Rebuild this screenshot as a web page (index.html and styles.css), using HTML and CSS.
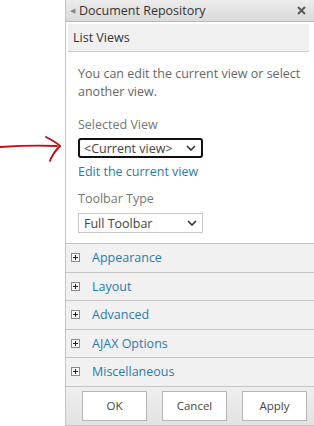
FILE: index.html
```html
<!DOCTYPE html>
<html>
<head>
<meta charset="utf-8">
<link rel="stylesheet" href="styles.css">
</head>
<body>
<svg class="annot" width="64" height="30" viewBox="0 0 64 30">
  <path d="M0 15 C 15 14, 35 13, 57 14" fill="none" stroke="#c40a14" stroke-width="1.8" stroke-linecap="round"/>
  <path d="M46 5 C 52 8, 57 11, 60 14 C 56 18, 52 23, 50 29" fill="none" stroke="#c40a14" stroke-width="1.8" stroke-linecap="round"/>
</svg>
<div class="panel">
  <div class="header">
    <span class="back">&#9664;</span>
    <span class="title">Document Repository</span>
    <svg class="close" width="9" height="9" viewBox="0 0 9 9"><path d="M1 1 L8 8 M8 1 L1 8" stroke="#5a5a5a" stroke-width="2"/></svg>
  </div>
  <div class="section-title">List Views</div>
  <div class="body">
    <p class="desc">You can edit the current view or select another view.</p>
    <div class="label label-first">Selected View</div>
    <div class="select select-active">
      <span>&lt;Current view&gt;</span>
      <svg class="chev" width="10" height="6" viewBox="0 0 10 6"><path d="M1 1 L5 5 L9 1" fill="none" stroke="#333" stroke-width="1.6"/></svg>
    </div>
    <a class="link" href="#">Edit the current view</a>
    <div class="label label-second">Toolbar Type</div>
    <div class="select">
      <span>Full Toolbar</span>
      <svg class="chev" width="10" height="6" viewBox="0 0 10 6"><path d="M1 1 L5 5 L9 1" fill="none" stroke="#333" stroke-width="1.6"/></svg>
    </div>
  </div>
  <div class="groups">
    <div class="group"><span class="plus"></span><span class="gname">Appearance</span></div>
    <div class="group"><span class="plus"></span><span class="gname">Layout</span></div>
    <div class="group"><span class="plus"></span><span class="gname">Advanced</span></div>
    <div class="group"><span class="plus"></span><span class="gname">AJAX Options</span></div>
    <div class="group"><span class="plus"></span><span class="gname">Miscellaneous</span></div>
  </div>
  <div class="footer">
    <button class="btn">OK</button>
    <button class="btn">Cancel</button>
    <button class="btn">Apply</button>
  </div>
</div>
</body>
</html>
```

FILE: styles.css
```css
html, body {
  margin: 0;
  padding: 0;
  background: #fff;
}
body {
  font-family: "Open Sans", "Noto Sans", sans-serif;
  font-size: 12.5px;
  color: #444;
  width: 314px;
  height: 426px;
  overflow: hidden;
  position: relative;
}
.annot {
  position: absolute;
  left: 0;
  top: 132px;
}
.panel {
  margin-left: 65px;
  border-left: 1px solid #c4c4c4;
  height: 426px;
  display: flex;
  flex-direction: column;
  box-sizing: border-box;
}
.header {
  height: 22px;
  box-sizing: border-box;
  border-bottom: 1px solid #b9b9b9;
  background: linear-gradient(#ececec, #dadada);
  display: flex;
  align-items: center;
  padding-left: 4px;
  padding-right: 8px;
  color: #333;
}
.back {
  font-size: 7px;
  color: #888;
  margin-right: 4px;
}
.title {
  flex: 1;
  font-size: 12.5px;
}
.close {
  display: block;
}
.section-title {
  margin: 2px 5px 0 2px;
  height: 28px;
  box-sizing: border-box;
  background: #f0f0f0;
  border-bottom: 1px solid #cfcfcf;
  padding-left: 5px;
  display: flex;
  align-items: center;
  color: #333;
  font-size: 12.5px;
}
.body {
  padding: 13px 0 0 12px;
  height: 191px;
  box-sizing: border-box;
}
.desc {
  margin: 0;
  line-height: 18px;
  color: #666;
  width: 225px;
}
.label {
  color: #777;
  line-height: 18px;
}
.label-first {
  margin-top: 15px;
}
.label-second {
  margin-top: 9px;
}
.select {
  width: 125px;
  height: 20px;
  box-sizing: border-box;
  border: 1px solid #c8c8c8;
  display: flex;
  align-items: center;
  justify-content: space-between;
  padding: 0 5px 0 5px;
  color: #444;
  margin-top: 5px;
}
.select-active {
  border: 2px solid #111;
  border-radius: 3px;
  padding-left: 4px;
  margin-top: 4px;
}
.chev {
  display: block;
}
.link {
  display: block;
  color: #2a7bab;
  text-decoration: none;
  line-height: 18px;
  margin-top: 5px;
}
.groups {
  border-top: 1px solid #c4c4c4;
  background: #f1f1f1;
}
.group {
  height: 28.5px;
  box-sizing: border-box;
  border-bottom: 1px solid #c4c4c4;
  display: flex;
  align-items: center;
  padding-left: 5px;
}
.plus {
  width: 9px;
  height: 9px;
  box-sizing: border-box;
  border: 1px solid #8a8a8a;
  background: #fff;
  position: relative;
  margin-right: 12px;
}
.plus::before, .plus::after {
  content: "";
  position: absolute;
  background: #222;
}
.plus::before {
  left: 1px;
  top: 3px;
  width: 5px;
  height: 1px;
}
.plus::after {
  left: 3px;
  top: 1px;
  width: 1px;
  height: 5px;
}
.gname {
  color: #2a7bab;
  font-size: 12.5px;
}
.footer {
  flex: 1;
  background: linear-gradient(#efefef, #e2e2e2);
  border-bottom: 1px solid #c4c4c4;
  display: flex;
  align-items: center;
  gap: 15px;
  padding-left: 16px;
}
.btn {
  width: 65px;
  height: 30px;
  background: #fff;
  border: 1px solid #b5b5b5;
  font-family: "Open Sans", "Noto Sans", sans-serif;
  font-size: 11.5px;
  color: #444;
  padding: 0;
}
```
